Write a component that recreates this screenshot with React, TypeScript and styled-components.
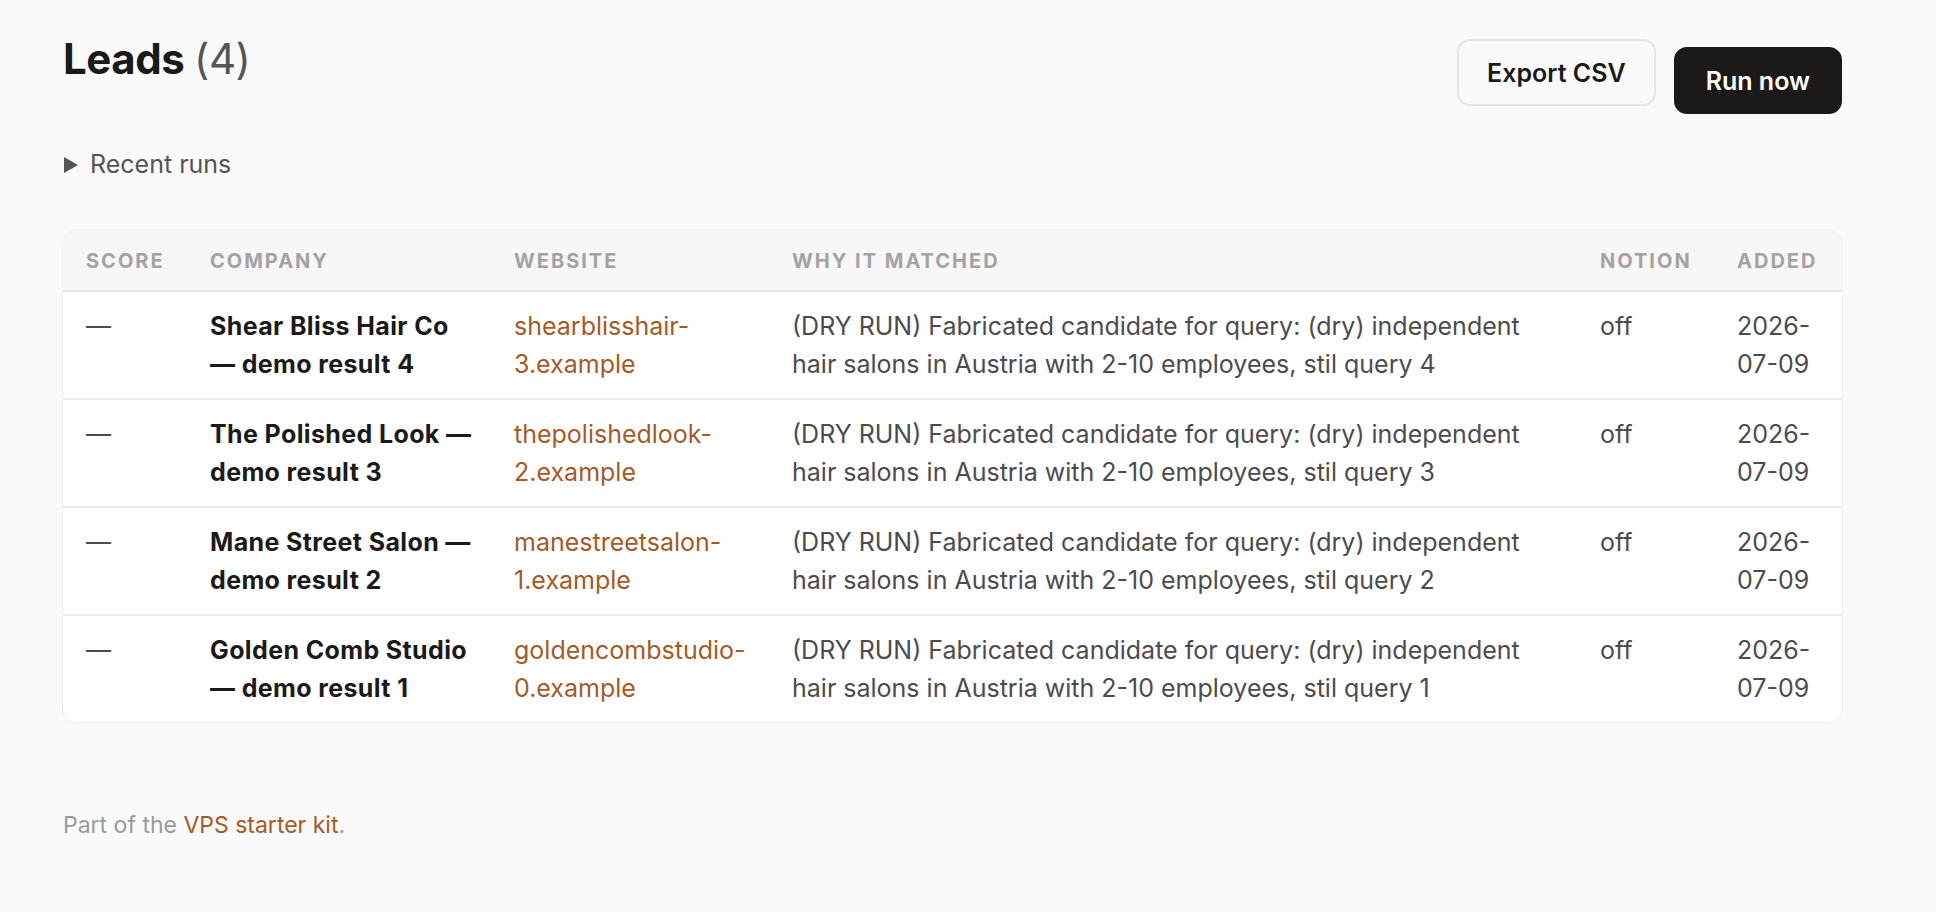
import { FC, type ReactElement } from "react"
import styled, { createGlobalStyle } from "styled-components"

interface Lead {
  id: number
  company: string
  website: string
  why: string
  notion: string
  added: string
}

const leads: Lead[] = [4, 3, 2, 1].map((n, i) => ({
  id: n,
  company: [
    "Shear Bliss Hair Co",
    "The Polished Look",
    "Mane Street Salon",
    "Golden Comb Studio",
  ][i],
  website: [
    "shearblisshair-3.example",
    "thepolishedlook-2.example",
    "manestreetsalon-1.example",
    "goldencombstudio-0.example",
  ][i],
  why: `(DRY RUN) Fabricated candidate for query: (dry) independent hair salons in Austria with 2-10 employees, stil query ${n}`,
  notion: "off",
  added: "2026-07-09",
}))

const columns = [
  { label: "Score", width: 124 },
  { label: "Company", width: 304 },
  { label: "Website", width: 278 },
  { label: "Why it matched", width: 808 },
  { label: "Notion", width: 137 },
  { label: "Added", width: 128 },
]

const App: FC = (): ReactElement => {
  return (
    <>
      <GlobalStyle />
      <Page>
        <TopBar>
          <Title>
            Leads <Count>(4)</Count>
          </Title>
          <Actions>
            <GhostButton>Export CSV</GhostButton>
            <PrimaryButton>Run now</PrimaryButton>
          </Actions>
        </TopBar>

        <RecentRuns>
          <summary>
            <svg width="16" height="16" viewBox="0 0 16 16">
              <path d="M1 0 L15 8 L1 16 Z" fill="#555" />
            </svg>
            Recent runs
          </summary>
        </RecentRuns>

        <Table>
          <colgroup>
            {columns.map(({ label, width }) => (
              <col key={label} style={{ width }} />
            ))}
          </colgroup>
          <thead>
            <tr>
              {columns.map(({ label }) => (
                <HeadCell key={label}>{label}</HeadCell>
              ))}
            </tr>
          </thead>
          <tbody>
            {leads.map((lead) => (
              <Row key={lead.id}>
                <Cell>—</Cell>
                <CompanyCell>{lead.company} — demo result {lead.id}</CompanyCell>
                <Cell>
                  <SiteLink href="#">{lead.website}</SiteLink>
                </Cell>
                <Cell>{lead.why}</Cell>
                <Cell>{lead.notion}</Cell>
                <Cell>{lead.added}</Cell>
              </Row>
            ))}
          </tbody>
        </Table>

        <Footer>
          Part of the <SiteLink href="#">VPS starter kit</SiteLink>.
        </Footer>
      </Page>
    </>
  )
}

export default App

const GlobalStyle = createGlobalStyle`
  html, body {
    margin: 0;
    background: #fafafa;
    font-family: Inter, "Noto Sans", sans-serif;
    color: #1a1a1a;
  }
`

const Page = styled.main`
  width: 1779px;
  padding: 32px 0 0 63px;
`

const TopBar = styled.header`
  display: flex;
  justify-content: space-between;
  align-items: flex-start;
`

const Title = styled.h1`
  margin: 0;
  font-size: 42px;
  line-height: 53px;
  font-weight: 700;
  letter-spacing: -0.01em;
`

const Count = styled.span`
  font-weight: 400;
  color: #555;
`

const Actions = styled.div`
  display: flex;
  align-items: flex-start;
  gap: 18px;
  padding-top: 7px;
`

const GhostButton = styled.button`
  height: 67px;
  padding: 0 28px;
  border: 2px solid #e4e4e4;
  border-radius: 13px;
  background: #fafafa;
  color: #1a1a1a;
  font-family: inherit;
  font-size: 25px;
  font-weight: 600;
  cursor: pointer;
`

const PrimaryButton = styled(GhostButton)`
  margin-top: 8px;
  padding: 0 30px;
  border-color: #1c1a18;
  background: #1c1a18;
  color: #fff;
`

const RecentRuns = styled.details`
  margin-top: 32px;
  font-size: 25px;
  line-height: 37px;
  color: #555;

  summary {
    display: flex;
    align-items: center;
    gap: 11px;
    list-style: none;
    cursor: pointer;
  }

  summary::-webkit-details-marker {
    display: none;
  }
`

const Table = styled.table`
  margin-top: 48px;
  width: 1779px;
  table-layout: fixed;
  border-collapse: separate;
  border-spacing: 0;
  background: #fff;
  border-radius: 14px;
  overflow: hidden;
  box-shadow: 0 0 0 1px #f1f1f1;
`

const HeadCell = styled.th`
  padding: 15px 23px 14px;
  background: #f7f7f7;
  border-bottom: 2px solid #e6e6e6;
  text-align: left;
  font-size: 20px;
  line-height: 30px;
  font-weight: 700;
  letter-spacing: 0.1em;
  text-transform: uppercase;
  color: #a3a3a3;
`

const Row = styled.tr`
  &:not(:last-child) td {
    border-bottom: 2px solid #ececec;
  }
`

const Cell = styled.td`
  padding: 15px 22px 15px 23px;
  vertical-align: top;
  font-size: 25px;
  line-height: 38px;
  color: #4c4c4c;
`

const CompanyCell = styled(Cell)`
  padding-right: 18px;
  font-weight: 700;
  letter-spacing: 0.015em;
  color: #1a1a1a;
`

const SiteLink = styled.a`
  color: #a65a26;
  text-decoration: none;
`

const Footer = styled.footer`
  margin-top: 86px;
  font-size: 23px;
  line-height: 34px;
  color: #9a9a9a;
`
